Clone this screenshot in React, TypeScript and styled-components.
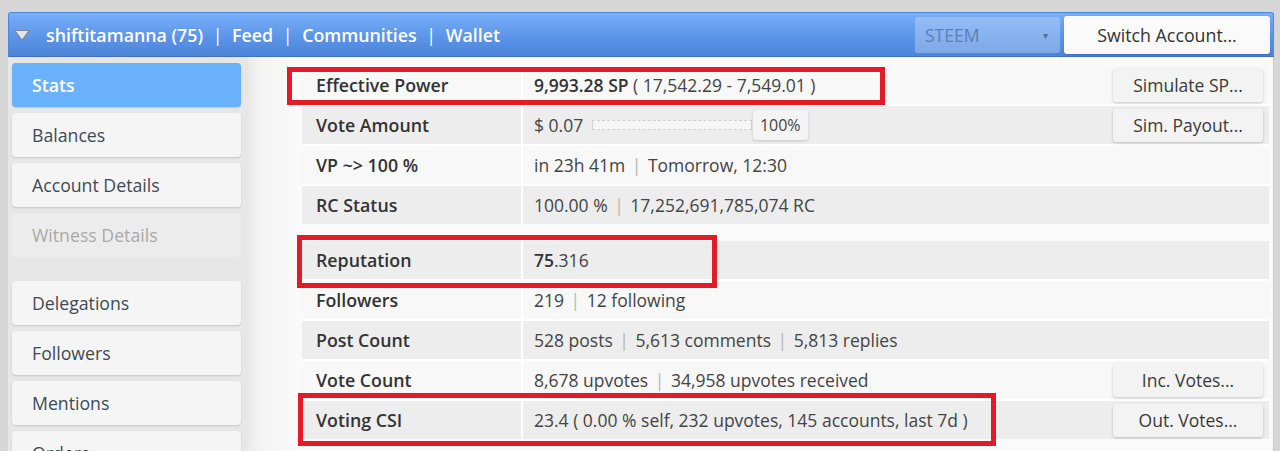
import React from "react";
import styled, { createGlobalStyle } from "styled-components";

const Global = createGlobalStyle`
  html, body {
    margin: 0;
    padding: 0;
    background: #d6d6d6;
    font-family: "Open Sans", "Liberation Sans", sans-serif;
    color: #333;
  }
  * { box-sizing: border-box; }
`;

//--------------------------------------------------------------------------

const Page = styled.div`
  margin: 12px 6px 0 8px;
  height: 439px;
  display: flex;
  flex-direction: column;
`;

const Header = styled.div`
  height: 45px;
  flex-shrink: 0;
  display: flex;
  align-items: center;
  justify-content: space-between;
  padding: 0 3px 0 5px;
  border-radius: 3px 3px 0 0;
  border: 1px solid #4f86d8;
  border-bottom-color: #3e70c6;
  background: linear-gradient(#78aef9, #5a93e6 60%, #4c84da);
`;

const NavLeft = styled.div`
  display: flex;
  align-items: center;
  gap: 16px;
`;

const NavText = styled.span`
  color: #fff;
  font-size: 17.8px;
  font-weight: 600;
  white-space: pre;
`;

const Pipe = styled.span`
  margin: 0 5px;
  font-weight: 400;
`;

const NavRight = styled.div`
  display: flex;
  align-items: center;
  gap: 4px;
`;

const Select = styled.div`
  width: 145px;
  height: 36px;
  padding: 0 12px 0 10px;
  display: flex;
  align-items: center;
  justify-content: space-between;
  border-radius: 3px;
  background: rgba(200, 220, 245, 0.4);
  color: #5b7fb4;
  font-size: 17.5px;
`;

const Caret = styled.span`
  font-size: 10px;
  color: #4f6f9f;
`;

const SwitchButton = styled.div`
  width: 206px;
  height: 38px;
  display: flex;
  align-items: center;
  justify-content: center;
  background: #fafafa;
  border-radius: 3px;
  color: #333;
  font-size: 17.8px;
  box-shadow: 0 1px 2px rgba(0, 0, 0, 0.2);
`;

const Body = styled.div`
  flex: 1;
  display: flex;
  overflow: hidden;
`;

const Sidebar = styled.div`
  width: 240px;
  flex-shrink: 0;
  padding: 6px 0 0 4px;
  display: flex;
  flex-direction: column;
  gap: 6px;
  background: #e7e7e7;
  box-shadow: 3px 0 10px rgba(0, 0, 0, 0.05);
  position: relative;
  z-index: 1;
`;

const MenuItem = styled.div<{ $active?: boolean; $disabled?: boolean; $gap?: boolean }>`
  width: 229px;
  height: 44px;
  flex-shrink: 0;
  display: flex;
  align-items: center;
  padding-left: 20px;
  border-radius: 4px;
  font-size: 17.7px;
  margin-top: ${p => (p.$gap ? "18px" : "0")};
  background: ${p => (p.$active ? "#6ab1fb" : p.$disabled ? "#ececec" : "#f5f5f5")};
  color: ${p => (p.$active ? "#fff" : p.$disabled ? "#a9a9a9" : "#3d4a55")};
  font-weight: ${p => (p.$active ? 600 : 400)};
  box-shadow: ${p => (p.$disabled ? "none" : "0 1px 2px rgba(0, 0, 0, 0.14)")};
`;

const Main = styled.div`
  flex: 1;
  position: relative;
  padding: 9px 4px 0 54px;
  background: linear-gradient(90deg, #f1f1f1, #fafafa 50px);
  border-right: 1px solid #c9c9c9;
  display: flex;
  flex-direction: column;
  gap: 17px;
`;

const Table = styled.div`
  display: flex;
  flex-direction: column;
  gap: 2px;
  background: #fff;
`;

const TRow = styled.div<{ $dark?: boolean }>`
  height: 38px;
  display: grid;
  grid-template-columns: 219px 1fr;
  gap: 2px;
  background: #fff;
  & > div {
    background: ${p => (p.$dark ? "#ededed" : "#f8f8f8")};
  }
`;

const Label = styled.div`
  display: flex;
  align-items: center;
  padding-left: 14px;
  font-size: 17.8px;
  font-weight: 600;
  color: #333;
`;

const Value = styled.div`
  display: flex;
  align-items: center;
  justify-content: space-between;
  padding: 0 6px 0 11px;
  font-size: 17.5px;
  color: #444;
  white-space: pre;
  b {
    font-weight: 600;
    color: #333;
  }
  & > span {
    display: flex;
    align-items: center;
  }
`;

const Bar = styled.span`
  color: #b5b5b5;
  margin: 0 2px;
`;

const Track = styled.span`
  display: inline-block;
  width: 160px;
  height: 10px;
  margin: 0 1px 0 4px;
  border: 1px dashed #cfcfcf;
  background: #f6f6f6;
`;

const Badge = styled.span`
  display: inline-flex;
  align-items: center;
  justify-content: center;
  width: 55px;
  height: 30px;
  border-radius: 3px;
  background: #f4f4f4;
  box-shadow: 0 1px 3px rgba(0, 0, 0, 0.18);
  color: #444;
  font-size: 16px;
`;

const SmallButton = styled.div`
  width: 150px;
  height: 33px;
  display: flex;
  align-items: center;
  justify-content: center;
  border-radius: 3px;
  background: #f3f3f3;
  box-shadow: 0 1px 3px rgba(0, 0, 0, 0.22);
  color: #3a3a3a;
  font-size: 17.5px;
`;

const Mark = styled.div`
  position: absolute;
  border: 5px solid #e31b26;
  pointer-events: none;
`;

//--------------------------------------------------------------------------

const menu = [
  { label: "Stats", active: true },
  { label: "Balances" },
  { label: "Account Details" },
  { label: "Witness Details", disabled: true },
  { label: "Delegations", gapBefore: true },
  { label: "Followers" },
  { label: "Mentions" },
  { label: "Orders" },
];

type Row = {
  label: string;
  value: React.ReactNode;
  button?: string;
};

const Sep = () => <Bar>|</Bar>;

const powerRows: Row[] = [
  {
    label: "Effective Power",
    value: (
      <>
        <b>9,993.28 SP</b> ( 17,542.29 - 7,549.01 )
      </>
    ),
    button: "Simulate SP...",
  },
  {
    label: "Vote Amount",
    value: (
      <>
        $ 0.07 <Track /> <Badge>100%</Badge>
      </>
    ),
    button: "Sim. Payout...",
  },
  {
    label: "VP ~> 100 %",
    value: (
      <>
        in 23h 41m <Sep /> Tomorrow, 12:30
      </>
    ),
  },
  {
    label: "RC Status",
    value: (
      <>
        100.00 % <Sep /> 17,252,691,785,074 RC
      </>
    ),
  },
];

const socialRows: Row[] = [
  {
    label: "Reputation",
    value: (
      <>
        <b>75</b>.316
      </>
    ),
  },
  {
    label: "Followers",
    value: (
      <>
        219 <Sep /> 12 following
      </>
    ),
  },
  {
    label: "Post Count",
    value: (
      <>
        528 posts <Sep /> 5,613 comments <Sep /> 5,813 replies
      </>
    ),
  },
  {
    label: "Vote Count",
    value: (
      <>
        8,678 upvotes <Sep /> 34,958 upvotes received
      </>
    ),
    button: "Inc. Votes...",
  },
  {
    label: "Voting CSI",
    value: <>23.4 ( 0.00 % self, 232 upvotes, 145 accounts, last 7d )</>,
    button: "Out. Votes...",
  },
];

//--------------------------------------------------------------------------

const StatTable = ({ rows, oddDark }: { rows: Row[]; oddDark?: boolean }) => (
  <Table>
    {rows.map((r, i) => (
      <TRow key={r.label} $dark={oddDark ? i % 2 === 0 : i % 2 === 1}>
        <Label>{r.label}</Label>
        <Value>
          <span>{r.value}</span>
          {r.button && <SmallButton>{r.button}</SmallButton>}
        </Value>
      </TRow>
    ))}
  </Table>
);

export default function App() {
  return (
    <>
      <Global />
      <Page>
        <Header>
          <NavLeft>
            <svg width="16" height="12" viewBox="0 0 16 12">
              <path d="M1 1.5h14L8 11z" fill="#e6e6e6" stroke="#7d7d7d" strokeWidth="0.9" strokeLinejoin="round" />
            </svg>
            <NavText>
              shiftitamanna (75) <Pipe>|</Pipe> Feed <Pipe>|</Pipe> Communities <Pipe>|</Pipe> Wallet
            </NavText>
          </NavLeft>
          <NavRight>
            <Select>
              <span>STEEM</span>
              <Caret>▾</Caret>
            </Select>
            <SwitchButton>Switch Account...</SwitchButton>
          </NavRight>
        </Header>

        <Body>
          <Sidebar>
            {menu.map(m => (
              <MenuItem key={m.label} $active={m.active} $disabled={m.disabled} $gap={m.gapBefore}>
                {m.label}
              </MenuItem>
            ))}
          </Sidebar>

          <Main>
            <StatTable rows={powerRows} />
            <StatTable rows={socialRows} oddDark />

            <Mark style={{ left: 39, top: 10, width: 598, height: 38 }} />
            <Mark style={{ left: 49, top: 178, width: 420, height: 53 }} />
            <Mark style={{ left: 50, top: 336, width: 698, height: 53 }} />
          </Main>
        </Body>
      </Page>
    </>
  );
}
